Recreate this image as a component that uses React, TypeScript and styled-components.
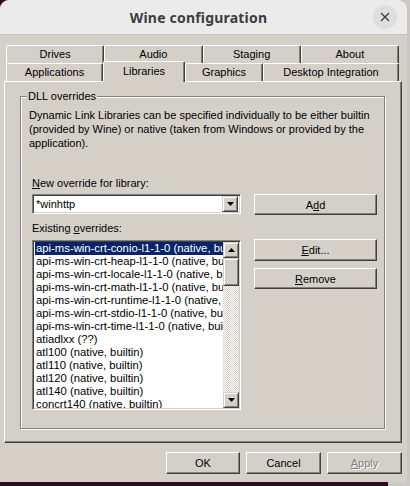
import React from 'react';
import styled, { createGlobalStyle } from 'styled-components';

const Global = createGlobalStyle`
  html, body { margin: 0; padding: 0; width: 410px; height: 486px; overflow: hidden; background: #2c0b1f; }
  #root { width: 410px; height: 486px; }
  * { box-sizing: border-box; }
`;

const FACE = '#d4d0c8';
const UI_FONT = '"Liberation Sans", Arial, sans-serif';

const Screen = styled.div`
  width: 410px;
  height: 486px;
  display: flex;
  align-items: flex-start;
  background: linear-gradient(to right, #2c0b1f 0, #2c0b1f 388px, #cbc9c6 388px);
`;

const Window = styled.div`
  width: 407px;
  height: 482px;
  flex: none;
  display: flex;
  flex-direction: column;
  background: ${FACE};
  border-radius: 9px 9px 0 0;
  overflow: hidden;
  box-shadow: 2px 0 0 #c9c7c4;
  font-family: ${UI_FONT};
  font-size: 11px;
  color: #000;
`;

const TitleBar = styled.div`
  height: 35px;
  flex: none;
  display: grid;
  grid-template-columns: 1fr auto 1fr;
  align-items: center;
  background: #ebebeb;
  border-bottom: 1px solid #c6c4bf;
  padding: 0 10px 0 0;
`;

const Title = styled.div`
  grid-column: 2;
  font-family: "Noto Sans", "DejaVu Sans", sans-serif;
  font-weight: 700;
  font-size: 14px;
  color: #3d3d3d;
  letter-spacing: 0.2px;
`;

const CloseButton = styled.div`
  grid-column: 3;
  justify-self: end;
  width: 24px;
  height: 24px;
  border-radius: 50%;
  background: #dedede;
  display: flex;
  align-items: center;
  justify-content: center;
`;

const Body = styled.div`
  flex: 1;
  display: flex;
  flex-direction: column;
  padding: 10px 5px 0 4px;
`;

const TabRows = styled.div`
  display: flex;
  flex-direction: column;
  padding: 0 3px 0 2px;
`;

const TabRow = styled.div`
  display: flex;
  height: 18px;
  align-items: flex-start;
`;

const Tab = styled.div<{ $w?: number; $active?: boolean }>`
  ${p => (p.$w ? `width: ${p.$w}px; flex: none;` : 'flex: 1;')}
  height: ${p => (p.$active ? 21 : 18)}px;
  margin-top: ${p => (p.$active ? -2 : 0)}px;
  position: relative;
  z-index: ${p => (p.$active ? 2 : 0)};
  display: flex;
  align-items: center;
  justify-content: center;
  padding-bottom: ${p => (p.$active ? 3 : 1)}px;
  background: ${FACE};
  border-top: 1px solid #fff;
  border-left: 1px solid #fff;
  border-right: 1px solid #404040;
  border-radius: 2px 2px 0 0;
  box-shadow: inset -1px 0 #808080;
  white-space: nowrap;
`;

const Panel = styled.div`
  width: 398px;
  height: 362px;
  display: flex;
  border-top: 1px solid #fff;
  border-left: 1px solid #fff;
  border-right: 1px solid #404040;
  border-bottom: 1px solid #404040;
  box-shadow: inset -1px -1px #808080;
  padding: 14px 0 0 15px;
`;

const GroupBox = styled.div`
  width: 365px;
  height: 333px;
  display: flex;
  flex-direction: column;
  border: 1px solid #808080;
  box-shadow: inset 1px 1px #fff, 1px 1px #fff;
`;

const GroupTitle = styled.div`
  align-self: flex-start;
  margin: -7px 0 0 6px;
  padding: 0 1px;
  line-height: 13px;
  background: ${FACE};
`;

const Description = styled.div`
  margin: 5px 0 0 8px;
  line-height: 14px;
  width: 350px;
`;

const FieldLabel = styled.div<{ $top: number }>`
  margin: ${p => p.$top}px 0 0 11px;
  line-height: 14px;
`;

const Row = styled.div<{ $top: number }>`
  display: flex;
  align-items: flex-start;
  gap: 13px;
  margin: ${p => p.$top}px 0 0 11px;
`;

const Sunken = styled.div`
  border: 1px solid;
  border-color: #808080 #fff #fff #808080;
  box-shadow: inset 1px 1px #404040, inset -1px -1px ${FACE};
  background: #fff;
`;

const Combo = styled(Sunken)`
  width: 209px;
  height: 20px;
  display: flex;
  align-items: center;
  padding: 2px;
`;

const ComboText = styled.div`
  flex: 1;
  padding-left: 1px;
  line-height: 14px;
`;

const Raised = styled.div`
  background: ${FACE};
  border: 1px solid;
  border-color: ${FACE} #404040 #404040 ${FACE};
  box-shadow: inset 1px 1px #fff, inset -1px -1px #808080;
  display: flex;
  align-items: center;
  justify-content: center;
`;

const ArrowButton = styled(Raised)`
  width: 16px;
  height: 16px;
  flex: none;
`;

const ComboArrow = styled(Raised)`
  width: 16px;
  height: 16px;
  flex: none;
`;

const Button = styled.div<{ $w: number; $h: number; $disabled?: boolean }>`
  width: ${p => p.$w}px;
  height: ${p => p.$h}px;
  flex: none;
  display: flex;
  align-items: center;
  justify-content: center;
  background: ${FACE};
  border: 1px solid;
  border-color: #fff #404040 #404040 #fff;
  box-shadow: inset -1px -1px #808080;
  color: ${p => (p.$disabled ? '#808080' : '#000')};
  text-shadow: ${p => (p.$disabled ? '1px 1px 0 #fff' : 'none')};
`;

const U = styled.span`
  text-decoration: underline;
  text-underline-offset: 1px;
`;

const ListBox = styled(Sunken)`
  width: 209px;
  height: 170px;
  display: flex;
  padding: 1px;
  overflow: hidden;
`;

const Items = styled.div`
  flex: 1;
  overflow: hidden;
  display: flex;
  flex-direction: column;
  padding-left: 1px;
`;

const Item = styled.div<{ $selected?: boolean }>`
  height: 13px;
  flex: none;
  line-height: 13px;
  padding-left: 1px;
  white-space: nowrap;
  overflow: hidden;
  font-size: 11.3px;
  background: ${p => (p.$selected ? '#0a246a' : 'transparent')};
  color: ${p => (p.$selected ? '#fff' : '#000')};
`;

const ScrollBar = styled.div`
  width: 16px;
  flex: none;
  display: flex;
  flex-direction: column;
`;

const Thumb = styled(Raised)`
  height: 28px;
  flex: none;
`;

const Track = styled.div`
  flex: 1;
  background-color: #fff;
  background-image: repeating-conic-gradient(${FACE} 0 25%, #fff 0 50%);
  background-size: 2px 2px;
`;

const SideButtons = styled.div`
  display: flex;
  flex-direction: column;
  gap: 7px;
  margin-top: -1px;
`;

const Footer = styled.div`
  display: flex;
  justify-content: flex-end;
  gap: 6px;
  margin-top: 9px;
`;

const Tri = ({ up }: { up?: boolean }) => (
  <svg width="7" height="4" viewBox="0 0 7 4">
    <polygon points={up ? '3.5,0 7,4 0,4' : '0,0 7,0 3.5,4'} fill="#000" />
  </svg>
);

const items = [
  'api-ms-win-crt-conio-l1-1-0 (native, builtin)',
  'api-ms-win-crt-heap-l1-1-0 (native, builtin)',
  'api-ms-win-crt-locale-l1-1-0 (native, builtin)',
  'api-ms-win-crt-math-l1-1-0 (native, builtin)',
  'api-ms-win-crt-runtime-l1-1-0 (native, builtin)',
  'api-ms-win-crt-stdio-l1-1-0 (native, builtin)',
  'api-ms-win-crt-time-l1-1-0 (native, builtin)',
  'atiadlxx (??)',
  'atl100 (native, builtin)',
  'atl110 (native, builtin)',
  'atl120 (native, builtin)',
  'atl140 (native, builtin)',
  'concrt140 (native, builtin)',
];

export default function App() {
  return (
    <>
      <Global />
      <Screen>
        <Window>
          <TitleBar>
            <Title>Wine configuration</Title>
            <CloseButton>
              <svg width="10" height="10" viewBox="0 0 10 10">
                <path d="M1 1 L9 9 M9 1 L1 9" stroke="#3d3d3d" strokeWidth="1.3" />
              </svg>
            </CloseButton>
          </TitleBar>
          <Body>
            <TabRows>
              <TabRow>
                <Tab>Drives</Tab>
                <Tab>Audio</Tab>
                <Tab>Staging</Tab>
                <Tab>About</Tab>
              </TabRow>
              <TabRow>
                <Tab $w={97}>Applications</Tab>
                <Tab $w={82} $active>Libraries</Tab>
                <Tab $w={78}>Graphics</Tab>
                <Tab $w={136}>Desktop Integration</Tab>
              </TabRow>
            </TabRows>
            <Panel>
              <GroupBox>
                <GroupTitle>DLL overrides</GroupTitle>
                <Description>
                  Dynamic Link Libraries can be specified individually to be either builtin
                  (provided by Wine) or native (taken from Windows or provided by the
                  application).
                </Description>
                <FieldLabel $top={26}>
                  <U>N</U>ew override for library:
                </FieldLabel>
                <Row $top={4}>
                  <Combo>
                    <ComboText>*winhttp</ComboText>
                    <ComboArrow>
                      <Tri />
                    </ComboArrow>
                  </Combo>
                  <Button $w={123} $h={21}>
                    A<U>d</U>d
                  </Button>
                </Row>
                <FieldLabel $top={6}>
                  Existing <U>o</U>verrides:
                </FieldLabel>
                <Row $top={5}>
                  <ListBox>
                    <Items>
                      {items.map((t, i) => (
                        <Item key={t} $selected={i === 0}>
                          {t}
                        </Item>
                      ))}
                    </Items>
                    <ScrollBar>
                      <ArrowButton>
                        <Tri up />
                      </ArrowButton>
                      <Thumb />
                      <Track />
                      <ArrowButton>
                        <Tri />
                      </ArrowButton>
                    </ScrollBar>
                  </ListBox>
                  <SideButtons>
                    <Button $w={123} $h={22}>
                      <U>E</U>dit...
                    </Button>
                    <Button $w={123} $h={21}>
                      <U>R</U>emove
                    </Button>
                  </SideButtons>
                </Row>
              </GroupBox>
            </Panel>
            <Footer>
              <Button $w={74} $h={22}>OK</Button>
              <Button $w={75} $h={22}>Cancel</Button>
              <Button $w={75} $h={22} $disabled>
                <U>A</U>pply
              </Button>
            </Footer>
          </Body>
        </Window>
      </Screen>
    </>
  );
}
